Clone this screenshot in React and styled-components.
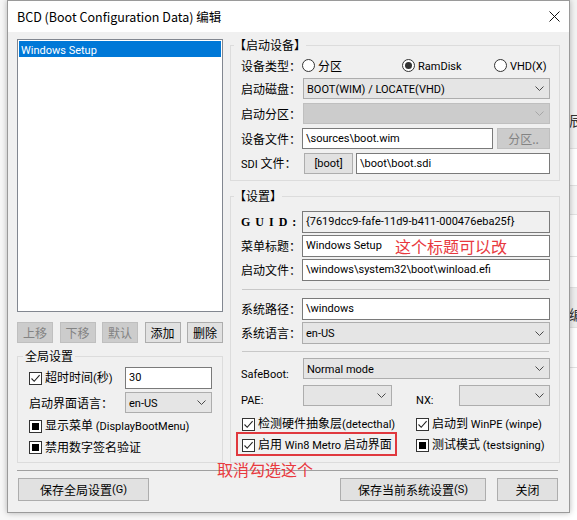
import React from "react";
import styled, { createGlobalStyle } from "styled-components";

const FONT = `"Noto Sans CJK SC", "Noto Sans", sans-serif`;
const LATIN = `Roboto, "Noto Sans CJK SC", sans-serif`;

const GlobalStyle = createGlobalStyle`
  html, body { margin: 0; padding: 0; background: #f7f7f7; }
  body { font-family: ${FONT}; font-size: 12px; color: #000; }
  * { box-sizing: border-box; }
`;

const Lat = styled.span`
  font-family: ${LATIN};
  font-size: 11px;
`;

const CJK_RE = /([\u2E80-\u9FFF\u3000-\u303F\uFF00-\uFFEF]+)/;

function T({ children }) {
  if (typeof children !== "string") return children;
  return children.split(CJK_RE).map((s, i) =>
    s === "" ? null : i % 2 === 1 ? <span key={i}>{s}</span> : <Lat key={i}>{s}</Lat>
  );
}

const Desktop = styled.div`
  position: relative;
  width: 577px;
  height: 520px;
  overflow: hidden;
  background: #f7f7f7;
`;

const BackWindow = styled.div`
  position: absolute;
  left: 540px;
  top: 0;
  width: 60px;
  height: 520px;
  background: #fff;
  display: flex;
  flex-direction: column;
`;

const BackRow = styled.div`
  height: ${(p) => p.$h}px;
  flex: none;
  background: ${(p) => p.$bg || "#fff"};
  border-bottom: 1px solid #e2e2e2;
  padding: ${(p) => p.$pt || 0}px 0 0 29px;
  font-size: 14px;
  line-height: 16px;
  color: #333;
`;

const Window = styled.div`
  position: relative;
  z-index: 1;
  margin: 0 0 0 7px;
  width: 563px;
  border: 1px solid #9a9a9a;
  background: #f0f0f0;
  box-shadow: 0 0 6px rgba(0, 0, 0, 0.28);
  display: flex;
  flex-direction: column;
`;

const TitleBar = styled.div`
  height: 31px;
  background: #fff;
  display: flex;
  align-items: center;
  justify-content: space-between;
  padding-left: 9px;
`;

const Title = styled.span`
  font-size: 12.5px;
  line-height: 16px;
  padding-top: 1px;
`;

const CloseBtn = styled.div`
  width: 30px;
  height: 31px;
  display: flex;
  align-items: center;
  justify-content: center;
`;

const Body = styled.div`
  display: flex;
  flex-direction: column;
  padding: 7px 9px 11px 9px;
`;

const Main = styled.div`
  display: flex;
  gap: 7px;
`;

const LeftCol = styled.div`
  width: 206px;
  display: flex;
  flex-direction: column;
`;

const RightCol = styled.div`
  width: 330px;
  display: flex;
  flex-direction: column;
  gap: 8px;
  margin-top: -1px;
`;

const ListBox = styled.div`
  height: 273px;
  background: #fff;
  border: 1px solid #828790;
  padding: 1px;
`;

const ListItem = styled.div`
  height: 16px;
  line-height: 16px;
  padding-left: 2px;
  background: ${(p) => (p.$selected ? "#0078d7" : "transparent")};
  color: ${(p) => (p.$selected ? "#fff" : "#000")};
`;

const ButtonRow = styled.div`
  margin-top: 10px;
  display: flex;
  justify-content: space-between;
`;

const Btn = styled.button`
  font-family: ${FONT};
  font-size: 12px;
  height: ${(p) => p.$h || 21}px;
  width: ${(p) => p.$w}px;
  flex: none;
  padding: 0;
  margin: 0 0 0 ${(p) => p.$ml || 0}px;
  border: 1px solid ${(p) => (p.disabled ? "#bfbfbf" : "#adadad")};
  background: ${(p) => (p.disabled ? "#cccccc" : "#e1e1e1")};
  color: ${(p) => (p.disabled ? "#838383" : "#000")};
  display: flex;
  align-items: center;
  justify-content: center;
  line-height: 16px;
`;

const Group = styled.fieldset`
  margin: ${(p) => p.$mt || 0}px 0 0 0;
  padding: 0;
  border: 1px solid #dcdcdc;
  min-width: 0;
`;

const Legend = styled.legend`
  margin-left: ${(p) => p.$ml}px;
  padding: 0 ${(p) => p.$pad ?? 2}px;
  font-size: 12px;
  line-height: 14px;
`;

const GroupBody = styled.div`
  padding: ${(p) => p.$pad};
  display: flex;
  flex-direction: column;
  gap: ${(p) => p.$gap || 0}px;
`;

const FormRow = styled.div`
  display: grid;
  grid-template-columns: ${(p) => p.$cols || "61px 1fr"};
  align-items: ${(p) => p.$align || "center"};
  height: ${(p) => p.$h}px;
  margin-top: ${(p) => p.$mt || 0}px;
`;

const Label = styled.span`
  font-size: 12px;
  line-height: 14px;
  white-space: nowrap;
  padding-top: ${(p) => p.$pt || 0}px;
`;

const GuidLabel = styled(Label)`
  font-family: "Liberation Serif", "Noto Serif", serif;
  font-weight: bold;
  letter-spacing: 5px;
`;

const TextBox = styled.div`
  position: relative;
  height: ${(p) => p.$h || 21}px;
  border: 1px solid #7a7a7a;
  background: ${(p) => (p.$readonly ? "#f0f0f0" : "#fff")};
  padding-left: 3px;
  display: flex;
  align-items: center;
  white-space: nowrap;
  line-height: 14px;
  flex: ${(p) => (p.$grow ? 1 : "initial")};
`;

const SelectBox = styled.div`
  height: ${(p) => p.$h || 21}px;
  display: flex;
  align-items: center;
  justify-content: space-between;
  padding: 0 5px 0 3px;
  background: ${(p) => (p.$disabled ? "#cccccc" : "#e5e5e5")};
  border: 1px solid ${(p) => (p.$disabled ? "#bfbfbf" : "#adadad")};
  line-height: 14px;
  white-space: nowrap;
`;

const Inline = styled.div`
  display: flex;
  align-items: center;
  padding-left: ${(p) => p.$pl || 0}px;
  height: 100%;
`;

const RadioGrid = styled.div`
  display: grid;
  grid-template-columns: 100px 92px auto;
  align-items: center;
`;

const RadioItem = styled.span`
  display: inline-flex;
  align-items: center;
  gap: 3px;
  line-height: 14px;
`;

const RadioCircle = styled.span`
  width: 13px;
  height: 13px;
  border-radius: 50%;
  border: 1px solid #333;
  background: #fff;
  display: inline-flex;
  align-items: center;
  justify-content: center;
  &::after {
    content: "";
    width: 7px;
    height: 7px;
    border-radius: 50%;
    background: ${(p) => (p.$on ? "#333" : "transparent")};
  }
`;

const CheckItem = styled.span`
  display: inline-flex;
  align-items: center;
  gap: 3px;
  line-height: 14px;
  white-space: nowrap;
  justify-self: start;
  margin-left: ${(p) => p.$ml || 0}px;
`;

const CheckBoxSquare = styled.span`
  width: 13px;
  height: 13px;
  flex: none;
  border: 1px solid #333;
  background: #fff;
  display: inline-flex;
  align-items: center;
  justify-content: center;
`;

const MixedFill = styled.span`
  width: 7px;
  height: 7px;
  background: #000;
`;

const Separator = styled.div`
  height: 1px;
  background: ${(p) => p.$color || "#c8c8c8"};
  margin: ${(p) => p.$m};
`;

const BottomBar = styled.div`
  display: flex;
  align-items: center;
  padding: 0 2px 0 1px;
  gap: 11px;
`;

const Spacer = styled.div`
  flex: 1;
`;

const Annotation = styled.span`
  position: absolute;
  color: #e8393e;
  font-family: ${FONT};
  font-size: 16px;
  line-height: 18px;
  white-space: nowrap;
  left: ${(p) => p.$left}px;
  top: ${(p) => p.$top};
  transform: ${(p) => p.$tf || "none"};
`;

const RedFrame = styled.span`
  position: relative;
  justify-self: start;
  margin-left: 1px;
  display: inline-flex;
  &::after {
    content: "";
    position: absolute;
    left: -6px;
    right: -5px;
    top: -5px;
    bottom: -3px;
    border: 2px solid #e0383e;
  }
`;

const CheckGrid = styled.div`
  display: grid;
  grid-template-columns: 175px 1fr;
  align-items: center;
  height: 18px;
  margin-top: ${(p) => p.$mt || 0}px;
`;

const PaeRight = styled.div`
  display: grid;
  grid-template-columns: 43px 1fr;
  align-items: start;
  padding-left: 24px;
  height: 100%;
`;

function Chevron({ color = "#4a4a4a" }) {
  return (
    <svg width="9" height="5" viewBox="0 0 9 5">
      <path d="M0.5 0.5 L4.5 4.5 L8.5 0.5" fill="none" stroke={color} strokeWidth="1" />
    </svg>
  );
}

function Select({ value, disabled, h }) {
  return (
    <SelectBox $disabled={disabled} $h={h}>
      <span>
        <T>{value}</T>
      </span>
      <Chevron color={disabled ? "#a6a6a6" : "#4a4a4a"} />
    </SelectBox>
  );
}

function Check({ state, children, ml }) {
  return (
    <CheckItem $ml={ml}>
      <CheckBoxSquare>
        {state === "checked" && (
          <svg width="11" height="11" viewBox="0 0 11 11">
            <path d="M1.5 5.5 L4.2 8.3 L9.6 2.2" fill="none" stroke="#222" strokeWidth="1.1" />
          </svg>
        )}
        {state === "mixed" && <MixedFill />}
      </CheckBoxSquare>
      <span>
        <T>{children}</T>
      </span>
    </CheckItem>
  );
}

function Radio({ on, children }) {
  return (
    <RadioItem>
      <RadioCircle $on={on} />
      <span>
        <T>{children}</T>
      </span>
    </RadioItem>
  );
}

export default function App() {
  return (
    <Desktop>
      <GlobalStyle />
      <BackWindow>
        <BackRow $h={149} $bg="#f3f3f3" $pt={112}>辰</BackRow>
        <BackRow $h={37} />
        <BackRow $h={29} $bg="#f6f6f6" />
        <BackRow $h={42} />
        <BackRow $h={31} />
        <BackRow $h={40} $bg="#eeeeee" $pt={18}>编</BackRow>
        <BackRow $h={40} />
        <BackRow $h={153} />
      </BackWindow>
      <Window>
        <TitleBar>
          <Title>BCD (Boot Configuration Data) 编辑</Title>
          <CloseBtn>
            <svg width="11" height="11" viewBox="0 0 11 11">
              <path d="M0.5 0.5 L10.5 10.5 M10.5 0.5 L0.5 10.5" stroke="#111" strokeWidth="1" />
            </svg>
          </CloseBtn>
        </TitleBar>
        <Body>
          <Main>
            <LeftCol>
              <ListBox>
                <ListItem $selected>
                  <T>Windows Setup</T>
                </ListItem>
              </ListBox>
              <ButtonRow>
                <Btn $w={36} disabled>上移</Btn>
                <Btn $w={36} disabled>下移</Btn>
                <Btn $w={36} disabled>默认</Btn>
                <Btn $w={36}>添加</Btn>
                <Btn $w={36}>删除</Btn>
              </ButtonRow>
              <Group $mt={6}>
                <Legend $ml={5}>全局设置</Legend>
                <GroupBody $pad="4px 10px 6px 11px">
                  <FormRow $cols="96px 1fr" $h={22}>
                    <Check state="checked">超时时间(秒)</Check>
                    <TextBox $h={22}>
                      <T>30</T>
                    </TextBox>
                  </FormRow>
                  <FormRow $cols="96px 1fr" $h={21} $mt={3}>
                    <Label>启动界面语言：</Label>
                    <Select value="en-US" />
                  </FormRow>
                  <FormRow $cols="1fr" $h={18} $mt={4}>
                    <Check state="mixed">显示菜单 (DisplayBootMenu)</Check>
                  </FormRow>
                  <FormRow $cols="1fr" $h={18} $mt={3}>
                    <Check state="mixed">禁用数字签名验证</Check>
                  </FormRow>
                </GroupBody>
              </Group>
            </LeftCol>
            <RightCol>
              <Group>
                <Legend $ml={3} $pad={0}>【启动设备】</Legend>
                <GroupBody $pad="5px 9px 6px 10px" $gap={4}>
                  <FormRow $h={17}>
                    <Label>设备类型：</Label>
                    <RadioGrid>
                      <Radio>分区</Radio>
                      <Radio on>RamDisk</Radio>
                      <Radio>VHD(X)</Radio>
                    </RadioGrid>
                  </FormRow>
                  <FormRow $h={21} $cols="62px 1fr">
                    <Label>启动磁盘：</Label>
                    <Select value="BOOT(WIM) / LOCATE(VHD)" />
                  </FormRow>
                  <FormRow $h={21} $cols="62px 1fr">
                    <Label>启动分区：</Label>
                    <Select value="" disabled />
                  </FormRow>
                  <FormRow $h={21} $cols="61px 1fr 57px">
                    <Label>设备文件：</Label>
                    <TextBox>
                      <T>\sources\boot.wim</T>
                    </TextBox>
                    <Btn $w={53} $ml={4} disabled>分区..</Btn>
                  </FormRow>
                  <FormRow $h={21} $cols="63px 49px 1fr">
                    <Label>
                      <T>SDI 文件：</T>
                    </Label>
                    <Btn $w={49}>
                      <T>[boot]</T>
                    </Btn>
                    <Inline $pl={3}>
                      <TextBox $grow>
                        <T>\boot\boot.sdi</T>
                      </TextBox>
                    </Inline>
                  </FormRow>
                </GroupBody>
              </Group>
              <Group>
                <Legend $ml={3} $pad={0}>【设置】</Legend>
                <GroupBody $pad="8px 9px 8px 10px">
                  <FormRow $h={22}>
                    <GuidLabel>GUID:</GuidLabel>
                    <TextBox $h={22} $readonly>
                      <T>{"{7619dcc9-fafe-11d9-b411-000476eba25f}"}</T>
                    </TextBox>
                  </FormRow>
                  <FormRow $h={22} $mt={2}>
                    <Label>菜单标题：</Label>
                    <TextBox $h={22}>
                      <T>Windows Setup</T>
                      <Annotation $left={92} $top="50%" $tf="translateY(-50%)">这个标题可以改</Annotation>
                    </TextBox>
                  </FormRow>
                  <FormRow $h={22} $mt={2}>
                    <Label>启动文件：</Label>
                    <TextBox $h={22}>
                      <T>\windows\system32\boot\winload.efi</T>
                    </TextBox>
                  </FormRow>
                  <Separator $m="8px 1px 8px 1px" />
                  <FormRow $h={22}>
                    <Label>系统路径：</Label>
                    <TextBox $h={22}>
                      <T>\windows</T>
                    </TextBox>
                  </FormRow>
                  <FormRow $h={22} $mt={2}>
                    <Label>系统语言：</Label>
                    <Select value="en-US" h={22} />
                  </FormRow>
                  <Separator $m="7px 1px 6px 1px" />
                  <FormRow $h={21} $align="start" $cols="62px 1fr">
                    <Label $pt={8}>
                      <T>SafeBoot:</T>
                    </Label>
                    <Select value="Normal mode" />
                  </FormRow>
                  <FormRow $h={21} $mt={6} $align="start" $cols="62px 89px 1fr">
                    <Label $pt={7}>
                      <T>PAE:</T>
                    </Label>
                    <Select value="" />
                    <PaeRight>
                      <Label $pt={7}>
                        <T>NX:</T>
                      </Label>
                      <Select value="" />
                    </PaeRight>
                  </FormRow>
                  <CheckGrid $mt={9}>
                    <Check state="checked" ml={1}>检测硬件抽象层(detecthal)</Check>
                    <Check state="checked">启动到 WinPE (winpe)</Check>
                  </CheckGrid>
                  <CheckGrid $mt={3}>
                    <RedFrame>
                      <Check state="checked">启用 Win8 Metro 启动界面</Check>
                      <Annotation $left={-25} $top="23px">取消勾选这个</Annotation>
                    </RedFrame>
                    <Check state="mixed">测试模式 (testsigning)</Check>
                  </CheckGrid>
                </GroupBody>
              </Group>
            </RightCol>
          </Main>
          <Separator $m="7px 2px 7px 0" $color="#a0a0a0" />
          <BottomBar>
            <Btn $w={131} $h={23}>
              <T>保存全局设置(G)</T>
            </Btn>
            <Spacer />
            <Btn $w={146} $h={23}>
              <T>保存当前系统设置(S)</T>
            </Btn>
            <Btn $w={61} $h={23}>关闭</Btn>
          </BottomBar>
        </Body>
      </Window>
    </Desktop>
  );
}
